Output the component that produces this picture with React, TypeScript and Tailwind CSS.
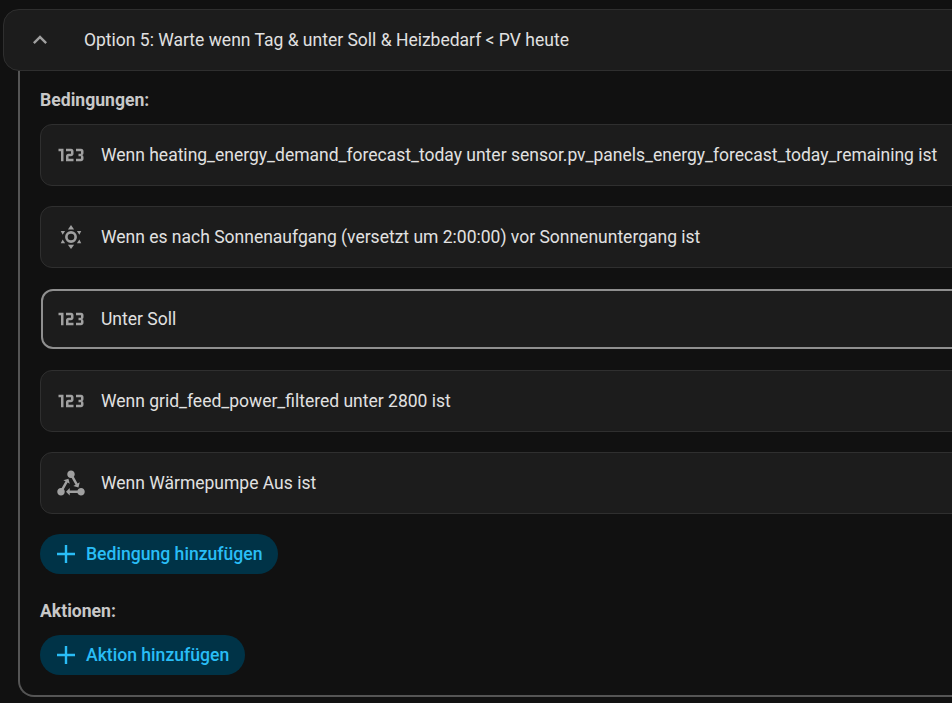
import React from 'react';

const NUMERIC = 'M4,17V9H2V7H6V17H4M22,15C22,16.11 21.1,17 20,17H16V15H20V13H18V11H20V9H16V7H20A2,2 0 0,1 22,9V10.5A1.5,1.5 0 0,1 20.5,12A1.5,1.5 0 0,1 22,13.5V15M14,15V17H8V13C8,11.89 8.9,11 10,11H12V9H8V7H12A2,2 0 0,1 14,9V11C14,12.11 13.1,13 12,13H10V15H14Z';
const STATE_MACHINE = 'M6.27 17.05C6.72 17.58 7 18.25 7 19C7 20.66 5.66 22 4 22S1 20.66 1 19 2.34 16 4 16C4.18 16 4.36 16 4.53 16.05L7.6 10.69L5.86 9.7L9.95 8.5L11 12.62L9.26 11.63L6.27 17.05M20 16C18.7 16 17.6 16.84 17.18 18H11V16L8 19L11 22V20H17.18C17.6 21.16 18.7 22 20 22C21.66 22 23 20.66 23 19S21.66 16 20 16M12 8C12.18 8 12.36 8 12.53 7.95L15.6 13.31L13.86 14.3L17.95 15.5L19 11.38L17.26 12.37L14.27 6.95C14.72 6.42 15 5.75 15 5C15 3.34 13.66 2 12 2S9 3.34 9 5 10.34 8 12 8Z';

function Icon({ d, className }: { d: string; className: string }) {
  return (
    <svg viewBox="0 0 24 24" className={className} fill="currentColor">
      <path d={d} />
    </svg>
  );
}

// ring with triangle rays, the sun condition icon
function SunIcon() {
  return (
    <svg viewBox="0 0 24 24" className="w-[30px] h-[30px] shrink-0 text-[#a0a0a0]" fill="currentColor">
      <circle cx="12" cy="12" r="3.7" fill="none" stroke="currentColor" strokeWidth="2.1" />
      <path d="M12 2.4L14.5 5.9H9.5Z" />
      <path d="M12 21.6L14.5 18.1H9.5Z" />
      <path d="M3.8 7.1H7.3L5.3 10.1Z" />
      <path d="M20.2 7.1H16.7L18.7 10.1Z" />
      <path d="M3.8 16.9H7.3L5.3 13.9Z" />
      <path d="M20.2 16.9H16.7L18.7 13.9Z" />
    </svg>
  );
}

function Row({ icon, text, selected }: { icon: React.ReactNode; text: string; selected?: boolean }) {
  return (
    <div
      className={
        selected
          ? 'h-[60px] my-px ml-px flex items-center gap-[15px] pl-[13px] rounded-l-[12px] bg-[#1c1c1c] border-2 border-[#8f8f8f] text-[#e1e1e1]'
          : 'h-[62px] flex items-center gap-[15px] pl-[15px] rounded-l-[12px] bg-[#1c1c1c] border border-[#2f2f2f] text-[#e1e1e1]'
      }
    >
      {icon}
      <span className="whitespace-nowrap">{text}</span>
    </div>
  );
}

function AddButton({ label, className }: { label: string; className: string }) {
  return (
    <button className={`h-10 flex items-center gap-[10px] pl-[16px] rounded-full bg-[#003347] text-[#29bdf6] text-[17.6px] font-medium ${className}`}>
      <svg viewBox="0 0 20 20" className="w-5 h-5 shrink-0" fill="currentColor">
        <path d="M8.8 1h2.4v7.8H19v2.4h-7.8V19H8.8v-7.8H1V8.8h7.8z" />
      </svg>
      {label}
    </button>
  );
}

export default function App() {
  const numeric = <Icon d={NUMERIC} className="w-[30px] h-[30px] shrink-0 text-[#a0a0a0]" />;

  return (
    <div className="w-[952px] h-[703px] overflow-hidden bg-[#111111] pt-[9px] pl-[3px] font-['Roboto',sans-serif] text-[17.5px]">
      <div className="w-[1000px]">
        <div className="h-[62px] flex items-center pl-[22px] gap-[30px] rounded-[16px] bg-[#1c1c1c] border border-[#2f2f2f] text-[#e1e1e1]">
          <Icon d="M7.41,15.41L12,10.83L16.59,15.41L18,14L12,8L6,14L7.41,15.41Z" className="w-7 h-7 shrink-0 text-[#a0a0a0]" />
          <span className="whitespace-nowrap">Option 5: Warte wenn Tag &amp; unter Soll &amp; Heizbedarf &lt; PV heute</span>
        </div>

        <div className="ml-[15px] pl-[20px] pt-[17px] pb-[20px] border-l-2 border-b-2 border-[#555555] rounded-bl-[16px]">
          <div className="h-6 leading-6 mb-3 text-[17.6px] font-bold text-[#c8c8c8]">Bedingungen:</div>
          <div className="flex flex-col gap-5">
            <Row icon={numeric} text="Wenn heating_energy_demand_forecast_today unter sensor.pv_panels_energy_forecast_today_remaining ist" />
            <Row icon={<SunIcon />} text="Wenn es nach Sonnenaufgang (versetzt um 2:00:00) vor Sonnenuntergang ist" />
            <Row icon={numeric} text="Unter Soll" selected />
            <Row icon={numeric} text="Wenn grid_feed_power_filtered unter 2800 ist" />
            <Row icon={<Icon d={STATE_MACHINE} className="w-[30px] h-[30px] shrink-0 text-[#a0a0a0]" />} text="Wenn Wärmepumpe Aus ist" />
          </div>
          <AddButton label="Bedingung hinzufügen" className="mt-5 w-[238px]" />
          <div className="h-6 leading-6 mt-[25px] mb-3 text-[17.6px] font-bold text-[#c8c8c8]">Aktionen:</div>
          <AddButton label="Aktion hinzufügen" className="w-[205px]" />
        </div>
      </div>
    </div>
  );
}
